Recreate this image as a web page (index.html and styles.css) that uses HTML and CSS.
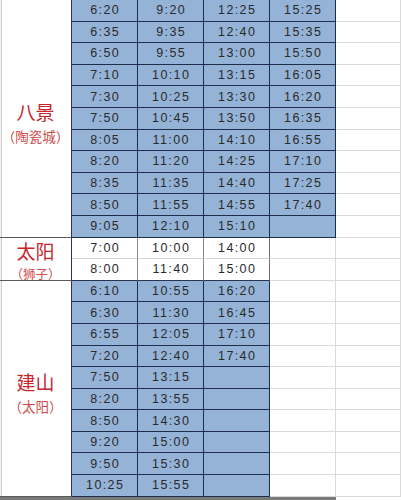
FILE: index.html
```html
<!DOCTYPE html>
<html lang="zh">
<head>
<meta charset="utf-8">
<link rel="stylesheet" href="styles.css">
</head>
<body>
<div class="sheet">
  <div class="label la"><span class="big">八景</span><span class="small">（陶瓷城）</span></div>
  <div class="c b">6:20</div><div class="c b">9:20</div><div class="c b">12:25</div><div class="c b">15:25</div><div class="c e"></div>
  <div class="c b">6:35</div><div class="c b">9:35</div><div class="c b">12:40</div><div class="c b">15:35</div><div class="c e"></div>
  <div class="c b">6:50</div><div class="c b">9:55</div><div class="c b">13:00</div><div class="c b">15:50</div><div class="c e"></div>
  <div class="c b">7:10</div><div class="c b">10:10</div><div class="c b">13:15</div><div class="c b">16:05</div><div class="c e"></div>
  <div class="c b">7:30</div><div class="c b">10:25</div><div class="c b">13:30</div><div class="c b">16:20</div><div class="c e"></div>
  <div class="c b">7:50</div><div class="c b">10:45</div><div class="c b">13:50</div><div class="c b">16:35</div><div class="c e"></div>
  <div class="c b">8:05</div><div class="c b">11:00</div><div class="c b">14:10</div><div class="c b">16:55</div><div class="c e"></div>
  <div class="c b">8:20</div><div class="c b">11:20</div><div class="c b">14:25</div><div class="c b">17:10</div><div class="c e"></div>
  <div class="c b">8:35</div><div class="c b">11:35</div><div class="c b">14:40</div><div class="c b">17:25</div><div class="c e"></div>
  <div class="c b">8:50</div><div class="c b">11:55</div><div class="c b">14:55</div><div class="c b">17:40</div><div class="c e"></div>
  <div class="c b">9:05</div><div class="c b">12:10</div><div class="c b">15:10</div><div class="c b"></div><div class="c e"></div>

  <div class="label lb"><span class="big">太阳</span><span class="small">（狮子）</span></div>
  <div class="c w">7:00</div><div class="c w">10:00</div><div class="c w wl">14:00</div><div class="c e"></div><div class="c e"></div>
  <div class="c w w2">8:00</div><div class="c w w2">11:40</div><div class="c w w2 wl">15:00</div><div class="c e"></div><div class="c e"></div>

  <div class="label lc"><span class="big">建山</span><span class="small">（太阳）</span></div>
  <div class="c b">6:10</div><div class="c b">10:55</div><div class="c b">16:20</div><div class="c e"></div><div class="c e"></div>
  <div class="c b">6:30</div><div class="c b">11:30</div><div class="c b">16:45</div><div class="c e"></div><div class="c e"></div>
  <div class="c b">6:55</div><div class="c b">12:05</div><div class="c b">17:10</div><div class="c e"></div><div class="c e"></div>
  <div class="c b">7:20</div><div class="c b">12:40</div><div class="c b">17:40</div><div class="c e"></div><div class="c e"></div>
  <div class="c b">7:50</div><div class="c b">13:15</div><div class="c b"></div><div class="c e"></div><div class="c e"></div>
  <div class="c b">8:20</div><div class="c b">13:55</div><div class="c b"></div><div class="c e"></div><div class="c e"></div>
  <div class="c b">8:50</div><div class="c b">14:30</div><div class="c b"></div><div class="c e"></div><div class="c e"></div>
  <div class="c b">9:20</div><div class="c b">15:00</div><div class="c b"></div><div class="c e"></div><div class="c e"></div>
  <div class="c b">9:50</div><div class="c b">15:30</div><div class="c b"></div><div class="c e"></div><div class="c e"></div>
  <div class="c b">10:25</div><div class="c b">15:55</div><div class="c b"></div><div class="c e"></div><div class="c e"></div>

  <div class="foot"></div>
</div>
</body>
</html>
```

FILE: styles.css
```css
html, body {
  margin: 0;
  padding: 0;
  background: #ffffff;
}
.sheet {
  width: 401px;
  height: 500px;
  overflow: hidden;
  display: grid;
  grid-template-columns: 72px 66px 66px 66px 66px 65px;
  grid-template-rows: repeat(23, 21.6px) 3px;
  font-family: "Liberation Sans", "Noto Sans CJK SC", sans-serif;
}
.c {
  box-sizing: border-box;
  display: flex;
  align-items: center;
  justify-content: center;
  font-size: 12.5px;
  letter-spacing: 1.4px;
  padding-left: 1.4px;
  color: #2a2a2a;
}
.b {
  background: #95b3d7;
  border-right: 1px solid #1f2d4d;
  border-bottom: 1px solid #1f2d4d;
}
.w {
  background: #ffffff;
  border-right: 1px solid #8a8a8a;
  border-bottom: 1px solid #d4d4d4;
}
.w2 {
  border-bottom: 1px solid #2a3450;
}
.wl {
  border-right: 1px solid #6f6f6f;
}
.e {
  background: #ffffff;
  border-right: 1px solid #dadada;
  border-bottom: 1px solid #dadada;
}
.label {
  box-sizing: border-box;
  display: flex;
  flex-direction: column;
  align-items: center;
  justify-content: center;
  padding-top: 8px;
  background: linear-gradient(to right, #f4f1e0 0, #f4f1e0 1px, #cfd0dc 1px, #cfd0dc 2px, #ffffff 2px);
  border-right: 1px solid #2a3450;
  border-bottom: 1px solid #5a5a5a;
  font-family: "Noto Sans CJK SC", sans-serif;
}
.la { grid-row: span 11; }
.lb { grid-row: span 2; justify-content: flex-start; padding-top: 0; }
.lc { grid-row: span 10; padding-top: 8px; }
.big {
  font-size: 19px;
  line-height: 28px;
  color: #c6262c;
}
.small {
  font-size: 13.5px;
  line-height: 20px;
  color: #cf4b4b;
}
.lb .big {
  line-height: 26px;
}
.lb .small {
  font-size: 12.5px;
  line-height: 18px;
  margin-top: 1px;
}
.foot {
  grid-column: 1 / 6;
  background: #7a7a7a;
}
```
